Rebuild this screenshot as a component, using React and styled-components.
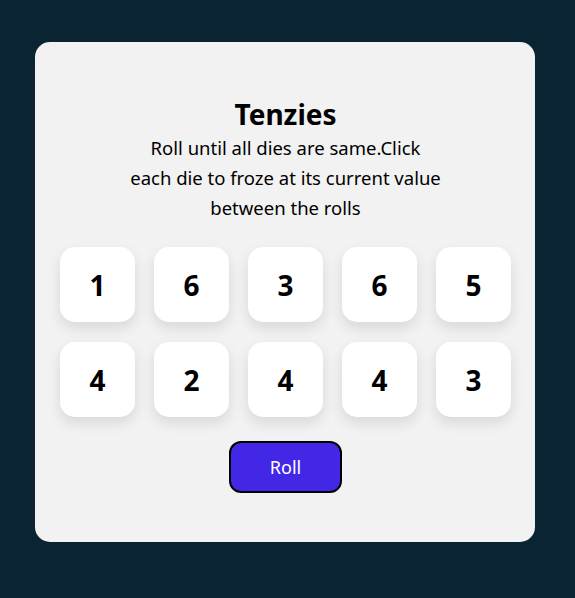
import React, { useState } from 'react';
import styled, { createGlobalStyle } from 'styled-components';

const GlobalStyle = createGlobalStyle`
  body {
    margin: 0;
    background-color: #0b2434;
    font-family: 'Noto Sans', 'Open Sans', sans-serif;
  }
`;

const Page = styled.div`
  padding: 42px 40px 56px 35px;
`;

const Card = styled.main`
  width: 500px;
  height: 500px;
  box-sizing: border-box;
  background-color: #f2f2f2;
  border-radius: 15px;
  display: flex;
  flex-direction: column;
  align-items: center;
  padding: 53px 24px 0 25px;
`;

const Title = styled.h1`
  margin: 0;
  font-size: 28px;
  font-weight: 700;
  line-height: 38px;
  color: #000;
`;

const Instructions = styled.p`
  margin: 0;
  text-align: center;
  font-size: 18.5px;
  line-height: 30px;
  color: #000;
`;

const DiceGrid = styled.div`
  display: grid;
  grid-template-columns: repeat(5, 75px);
  grid-auto-rows: 75px;
  column-gap: 19px;
  row-gap: 20px;
  margin-top: 24px;
`;

const Die = styled.button`
  border: none;
  border-radius: 15px;
  background-color: ${(p) => (p.$held ? '#59e391' : '#fff')};
  box-shadow: 0 6px 14px rgba(0, 0, 0, 0.11);
  font-family: inherit;
  font-size: 28px;
  font-weight: 700;
  color: #000;
  cursor: pointer;
  display: flex;
  align-items: center;
  justify-content: center;
`;

const RollButton = styled.button`
  margin-top: 24px;
  width: 113px;
  height: 52px;
  border: 2px solid #000;
  border-radius: 12px;
  background-color: #4327e6;
  color: #fff;
  font-family: inherit;
  font-size: 18px;
  cursor: pointer;
`;

const startDice = [1, 6, 3, 6, 5, 4, 2, 4, 4, 3];

const App = () => {
  const [dice, setDice] = useState(
    startDice.map((value, i) => ({ id: i, value, held: false }))
  );

  // 고정된 주사위 토글
  const holdDie = (id) => {
    setDice(dice.map((d) => (d.id === id ? { ...d, held: !d.held } : d)));
  };

  const rollDice = () => {
    setDice(
      dice.map((d) =>
        d.held ? d : { ...d, value: Math.ceil(Math.random() * 6) }
      )
    );
  };

  return (
    <Page>
      <GlobalStyle />
      <Card>
        <Title>Tenzies</Title>
        <Instructions>
          Roll until all dies are same.Click
          <br />
          each die to froze at its current value
          <br />
          between the rolls
        </Instructions>
        <DiceGrid>
          {dice.map((d) => (
            <Die key={d.id} $held={d.held} onClick={() => holdDie(d.id)}>
              {d.value}
            </Die>
          ))}
        </DiceGrid>
        <RollButton onClick={rollDice}>Roll</RollButton>
      </Card>
    </Page>
  );
};

export default App;
